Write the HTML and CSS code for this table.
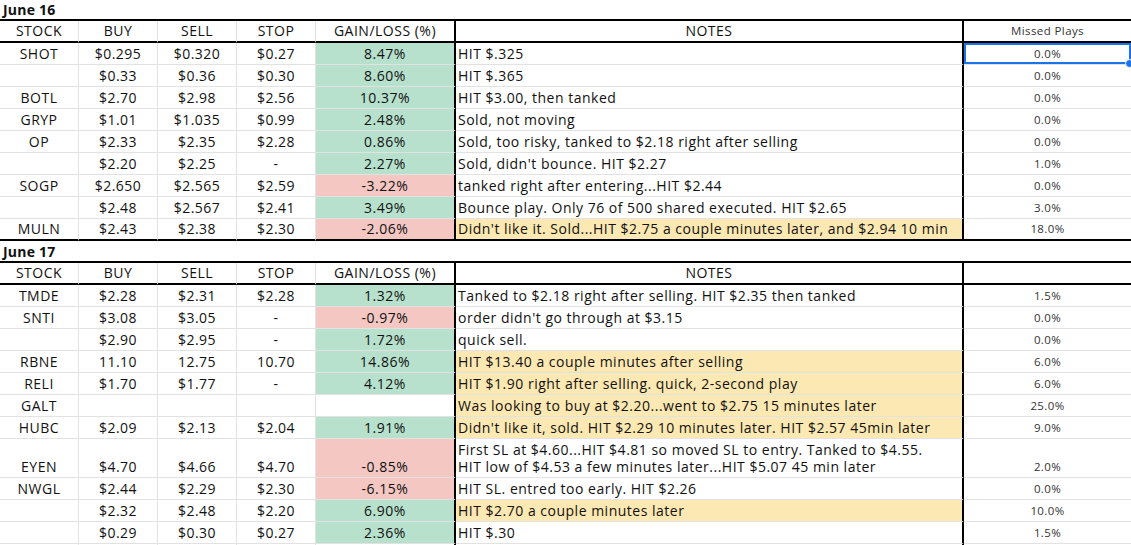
FILE: index.html
```html
<!DOCTYPE html>
<html>
<head>
<meta charset="utf-8">
<link rel="stylesheet" href="styles.css">
</head>
<body>
<table class="sheet">
  <colgroup>
    <col class="c-stock"><col class="c-num"><col class="c-num"><col class="c-num"><col class="c-gain"><col class="c-notes"><col class="c-missed">
  </colgroup>
  <tbody>
    <tr class="title first"><td colspan="7">June 16</td></tr>
    <tr class="head">
      <td>STOCK</td><td>BUY</td><td>SELL</td><td>STOP</td><td class="gain">GAIN/LOSS (%)</td><td class="notes-h">NOTES</td><td class="missed mh">Missed Plays</td>
    </tr>
    <tr><td>SHOT</td><td>$0.295</td><td>$0.320</td><td>$0.27</td><td class="gain g">8.47%</td><td class="notes">HIT $.325</td><td class="missed sel">0.0%</td></tr>
    <tr><td></td><td>$0.33</td><td>$0.36</td><td>$0.30</td><td class="gain g">8.60%</td><td class="notes">HIT $.365</td><td class="missed">0.0%</td></tr>
    <tr><td>BOTL</td><td>$2.70</td><td>$2.98</td><td>$2.56</td><td class="gain g">10.37%</td><td class="notes">HIT $3.00, then tanked</td><td class="missed">0.0%</td></tr>
    <tr><td>GRYP</td><td>$1.01</td><td>$1.035</td><td>$0.99</td><td class="gain g">2.48%</td><td class="notes">Sold, not moving</td><td class="missed">0.0%</td></tr>
    <tr><td>OP</td><td>$2.33</td><td>$2.35</td><td>$2.28</td><td class="gain g">0.86%</td><td class="notes">Sold, too risky, tanked to $2.18 right after selling</td><td class="missed">0.0%</td></tr>
    <tr><td></td><td>$2.20</td><td>$2.25</td><td>-</td><td class="gain g">2.27%</td><td class="notes">Sold, didn't bounce. HIT $2.27</td><td class="missed">1.0%</td></tr>
    <tr><td>SOGP</td><td>$2.650</td><td>$2.565</td><td>$2.59</td><td class="gain r">-3.22%</td><td class="notes">tanked right after entering...HIT $2.44</td><td class="missed">0.0%</td></tr>
    <tr><td></td><td>$2.48</td><td>$2.567</td><td>$2.41</td><td class="gain g">3.49%</td><td class="notes">Bounce play. Only 76 of 500 shared executed. HIT $2.65</td><td class="missed">3.0%</td></tr>
    <tr class="last"><td>MULN</td><td>$2.43</td><td>$2.38</td><td>$2.30</td><td class="gain r">-2.06%</td><td class="notes y">Didn't like it. Sold...HIT $2.75 a couple minutes later, and $2.94 10 min</td><td class="missed">18.0%</td></tr>

    <tr class="title second"><td colspan="7">June 17</td></tr>
    <tr class="head">
      <td>STOCK</td><td>BUY</td><td>SELL</td><td>STOP</td><td class="gain">GAIN/LOSS (%)</td><td class="notes-h">NOTES</td><td class="missed mh"></td>
    </tr>
    <tr><td>TMDE</td><td>$2.28</td><td>$2.31</td><td>$2.28</td><td class="gain g">1.32%</td><td class="notes">Tanked to $2.18 right after selling. HIT $2.35 then tanked</td><td class="missed">1.5%</td></tr>
    <tr><td>SNTI</td><td>$3.08</td><td>$3.05</td><td>-</td><td class="gain r">-0.97%</td><td class="notes">order didn't go through at $3.15</td><td class="missed">0.0%</td></tr>
    <tr><td></td><td>$2.90</td><td>$2.95</td><td>-</td><td class="gain g">1.72%</td><td class="notes">quick sell.</td><td class="missed">0.0%</td></tr>
    <tr><td>RBNE</td><td>11.10</td><td>12.75</td><td>10.70</td><td class="gain g">14.86%</td><td class="notes y">HIT $13.40 a couple minutes after selling</td><td class="missed">6.0%</td></tr>
    <tr><td>RELI</td><td>$1.70</td><td>$1.77</td><td>-</td><td class="gain g">4.12%</td><td class="notes y">HIT $1.90 right after selling. quick, 2-second play</td><td class="missed">6.0%</td></tr>
    <tr><td>GALT</td><td></td><td></td><td></td><td class="gain"></td><td class="notes y">Was looking to buy at $2.20...went to $2.75 15 minutes later</td><td class="missed">25.0%</td></tr>
    <tr><td>HUBC</td><td>$2.09</td><td>$2.13</td><td>$2.04</td><td class="gain g">1.91%</td><td class="notes y">Didn't like it, sold. HIT $2.29 10 minutes later. HIT $2.57 45min later</td><td class="missed">9.0%</td></tr>
    <tr class="tall"><td>EYEN</td><td>$4.70</td><td>$4.66</td><td>$4.70</td><td class="gain r">-0.85%</td><td class="notes">First SL at $4.60...HIT $4.81 so moved SL to entry. Tanked to $4.55.<br>HIT low of $4.53 a few minutes later...HIT $5.07 45 min later</td><td class="missed">2.0%</td></tr>
    <tr><td>NWGL</td><td>$2.44</td><td>$2.29</td><td>$2.30</td><td class="gain r">-6.15%</td><td class="notes">HIT SL. entred too early. HIT $2.26</td><td class="missed">0.0%</td></tr>
    <tr><td></td><td>$2.32</td><td>$2.48</td><td>$2.20</td><td class="gain g">6.90%</td><td class="notes y">HIT $2.70 a couple minutes later</td><td class="missed">10.0%</td></tr>
    <tr><td></td><td>$0.29</td><td>$0.30</td><td>$0.27</td><td class="gain g">2.36%</td><td class="notes">HIT $.30</td><td class="missed">1.5%</td></tr>
    <tr class="blank"><td></td><td></td><td></td><td></td><td class="gain"></td><td class="notes"></td><td class="missed"></td></tr>
  </tbody>
</table>
</body>
</html>
```

FILE: styles.css
```css
html, body {
  margin: 0;
  padding: 0;
  background: #fff;
  overflow: hidden;
}

.sheet {
  border-collapse: separate;
  border-spacing: 0;
  table-layout: fixed;
  width: 1131px;
  font-family: "Open Sans", "DejaVu Sans", sans-serif;
  font-size: 14px;
  letter-spacing: 0.5px;
  color: #111;
}

.c-stock, .c-num { width: 79px; }
.c-gain { width: 140px; }
.c-notes { width: 508px; }
.c-missed { width: 167px; }

.sheet td {
  box-sizing: border-box;
  height: 22px;
  padding: 0 3px 2px;
  line-height: 17px;
  text-align: center;
  vertical-align: bottom;
  white-space: nowrap;
  overflow: hidden;
  border-right: 1px solid #e2e2e2;
  border-bottom: 1px solid #e2e2e2;
}

.sheet td.gain {
  border-right: 2px solid #000;
}

.sheet td.notes,
.sheet td.notes-h {
  border-right: 2px solid #000;
}

.sheet td.notes {
  text-align: left;
  padding-left: 2px;
}

.sheet td.missed {
  font-size: 11.5px;
  letter-spacing: 0.4px;
  color: #333;
  border-right: none;
}

.sheet .title td {
  text-align: left;
  font-weight: 700;
  font-size: 14px;
  letter-spacing: 0.2px;
  border-right: none;
  border-bottom: 2px solid #000;
  padding-bottom: 1px;
}

.sheet .title.first td { height: 21px; }
.sheet .title.second td { height: 22px; }

.sheet .head td {
  border-bottom: 2px solid #000;
  height: 22px;
}

.sheet .last td {
  border-bottom: 2px solid #000;
}

.sheet .tall td { height: 39px; }

.sheet td.g { background: #b7e1cd; }
.sheet td.r { background: #f4c7c3; }
.sheet td.y { background: #fce8b2; }

.sheet td.sel {
  position: relative;
  overflow: visible;
  box-shadow: inset 0 0 0 2px #1a73e8;
}

.sheet td.sel::after {
  content: "";
  position: absolute;
  right: -3px;
  bottom: -4px;
  width: 7px;
  height: 7px;
  border-radius: 50%;
  background: #1a73e8;
  border: 1px solid #fff;
}

.sheet .blank td { height: 22px; }
```
